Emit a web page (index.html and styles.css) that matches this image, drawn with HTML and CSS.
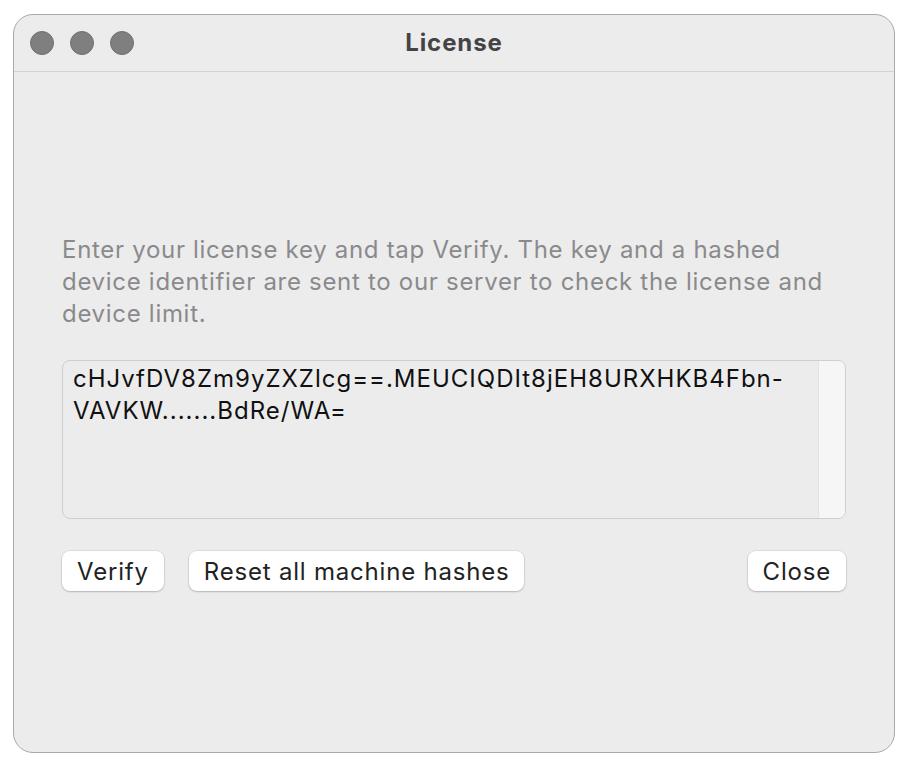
FILE: index.html
```html
<!DOCTYPE html>
<html lang="en">

<head>
    <meta charset="UTF-8">
    <title>License</title>
    <link rel="stylesheet" href="styles.css">
</head>

<body>
    <div class="window">
        <div class="titlebar">
            <div class="lights">
                <span class="light"></span>
                <span class="light"></span>
                <span class="light"></span>
            </div>
            <h1 class="title">License</h1>
        </div>
        <div class="content">
            <p class="hint">Enter your license key and tap Verify. The key and a hashed device identifier are sent to our server to check the license and device limit.</p>
            <div class="keybox">
                <div class="keytext">cHJvfDV8Zm9yZXZlcg==.MEUCIQDIt8jEH8URXHKB4Fbn-VAVKW.......BdRe/WA=</div>
                <div class="scrolltrack"></div>
            </div>
            <div class="actions">
                <button class="btn">Verify</button>
                <button class="btn">Reset all machine hashes</button>
                <button class="btn btn-right">Close</button>
            </div>
        </div>
    </div>
</body>

</html>
```

FILE: styles.css
```css
* {
    margin: 0;
    padding: 0;
    box-sizing: border-box;
}

body {
    font-family: Inter, 'Noto Sans', sans-serif;
    background-color: #ffffff;
    padding: 14px 0 0 13px;
}

.window {
    width: 882px;
    height: 739px;
    background-color: #ececed;
    border: 1px solid #a9a9a9;
    border-radius: 20px;
    overflow: hidden;
}

.titlebar {
    position: relative;
    height: 57px;
    border-bottom: 1px solid #d3d3d4;
    display: flex;
    align-items: center;
    justify-content: center;
}

.lights {
    position: absolute;
    left: 16px;
    top: 16px;
    display: flex;
    gap: 16px;
}

.light {
    width: 24px;
    height: 24px;
    border-radius: 50%;
    background-color: #7f7f80;
    border: 1px solid #6f6f70;
}

.title {
    font-size: 24px;
    font-weight: 700;
    letter-spacing: 0.9px;
    color: #444446;
    margin-top: -2px;
}

.content {
    padding: 162px 48px 0 48px;
}

.hint {
    font-size: 24px;
    line-height: 32px;
    letter-spacing: 0.7px;
    color: #8a8a8c;
    margin-bottom: 30px;
}

.keybox {
    display: flex;
    height: 159px;
    border: 1px solid #cfcfd0;
    border-radius: 8px;
    overflow: hidden;
}

.keytext {
    flex: 1;
    padding: 2px 20px 0 10px;
    font-size: 24px;
    line-height: 32px;
    letter-spacing: 1px;
    color: #111111;
    word-break: break-word;
}

.scrolltrack {
    width: 27px;
    background-color: #f6f6f6;
    border-left: 1px solid #e4e4e5;
}

.actions {
    display: flex;
    gap: 25px;
    margin-top: 32px;
}

.btn {
    height: 40px;
    padding: 0 15px;
    font-family: inherit;
    font-size: 24px;
    letter-spacing: 0.8px;
    color: #222222;
    background-color: #ffffff;
    border: none;
    border-radius: 8px;
    box-shadow: 0 0 0 1px rgba(0, 0, 0, 0.06), 0 1px 2px rgba(0, 0, 0, 0.18);
}

.btn-right {
    margin-left: auto;
}
```
